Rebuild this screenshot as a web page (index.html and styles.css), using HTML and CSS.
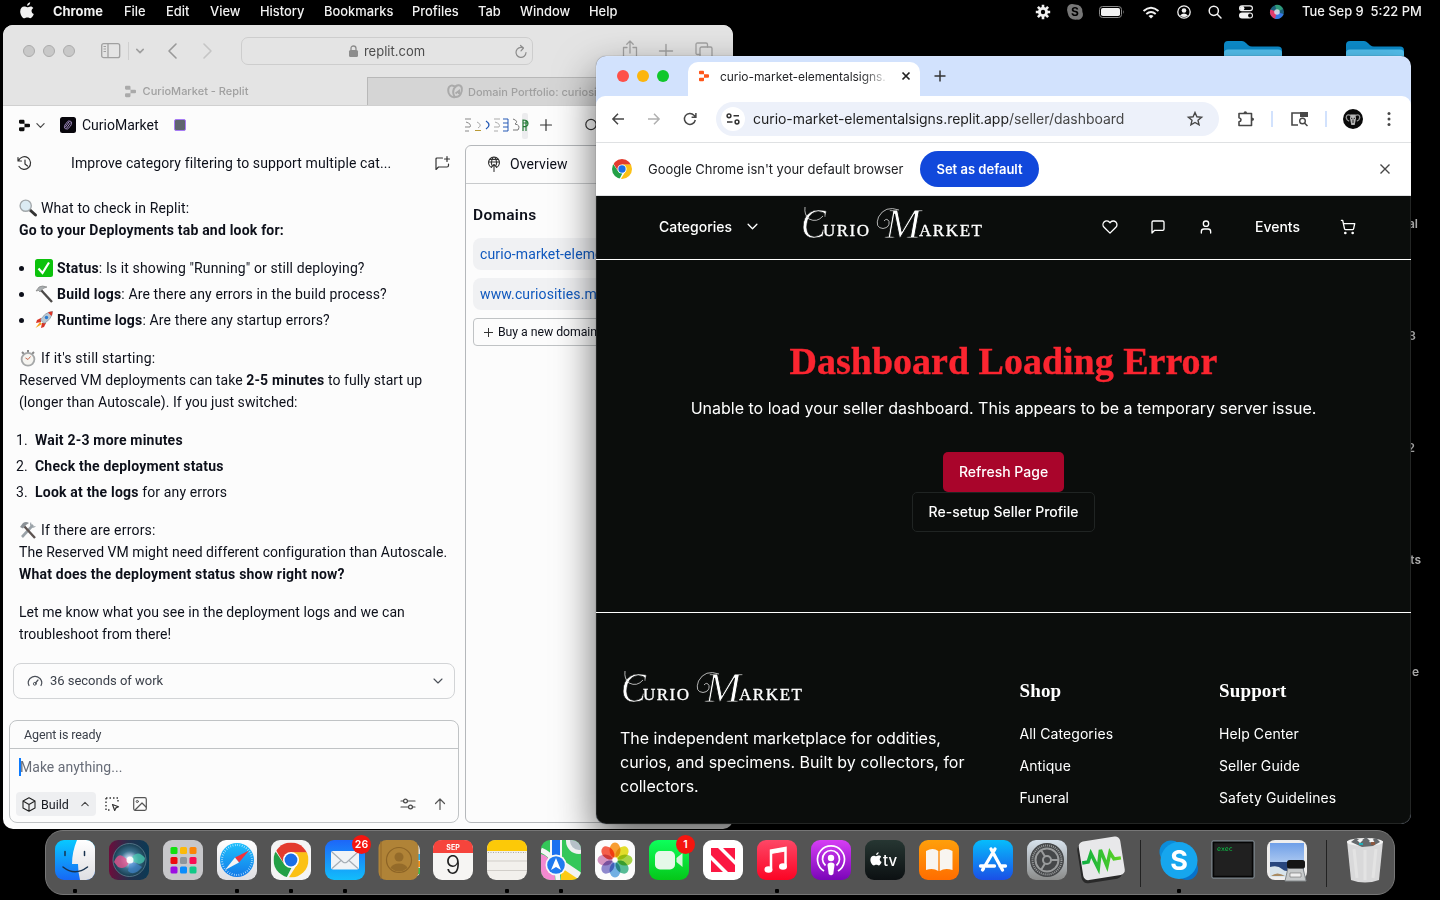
FILE: index.html
```html
<!DOCTYPE html>
<html lang="en">
<head>
<meta charset="utf-8">
<title>Curio Market</title>
<link rel="stylesheet" href="styles.css">
</head>
<body>
<svg class="defs" width="0" height="0" aria-hidden="true">
  <defs>
    <linearGradient id="gFinder" x2="0" y2="1"><stop stop-color="#08c9ff"/><stop offset="1" stop-color="#1768f5"/></linearGradient>
    <linearGradient id="gWhite" x2="0" y2="1"><stop stop-color="#fff"/><stop offset="1" stop-color="#dedee2"/></linearGradient>
    <linearGradient id="gSiriBg" x2="1" y2="0"><stop stop-color="#6d0d3c"/><stop offset=".5" stop-color="#23304c"/><stop offset="1" stop-color="#0b3a55"/></linearGradient>
    <radialGradient id="gSiri"><stop stop-color="#fff"/><stop offset=".25" stop-color="#a8c4e0"/><stop offset=".55" stop-color="#3a6f8c"/><stop offset="1" stop-color="#173c50"/></radialGradient>
    <linearGradient id="gBlue" x2="0" y2="1"><stop stop-color="#1ec0fc"/><stop offset="1" stop-color="#1279e8"/></linearGradient>
    <linearGradient id="gMail" x2="0" y2="1"><stop stop-color="#1d66f8"/><stop offset="1" stop-color="#12bdfb"/></linearGradient>
    <linearGradient id="gStore" x2="0" y2="1"><stop stop-color="#06bdfc"/><stop offset="1" stop-color="#1b4fe6"/></linearGradient>
    <linearGradient id="gGreen" x2="0" y2="1"><stop stop-color="#0dff5b"/><stop offset="1" stop-color="#05c719"/></linearGradient>
    <linearGradient id="gRed" x2="0" y2="1"><stop stop-color="#fe4766"/><stop offset="1" stop-color="#fb0424"/></linearGradient>
    <linearGradient id="gPurple" x2="0" y2="1"><stop stop-color="#d63ef5"/><stop offset="1" stop-color="#7a05b8"/></linearGradient>
    <linearGradient id="gOrange" x2="0" y2="1"><stop stop-color="#ff9f0a"/><stop offset="1" stop-color="#ff6d00"/></linearGradient>
    <linearGradient id="gTv" x2="0" y2="1"><stop stop-color="#263632"/><stop offset="1" stop-color="#0c1012"/></linearGradient>
    <linearGradient id="gGrey" x2="0" y2="1"><stop stop-color="#d7e2ec"/><stop offset="1" stop-color="#8b8c8b"/></linearGradient>
    <linearGradient id="gPulse"><stop stop-color="#0dae42"/><stop offset="1" stop-color="#5ed323"/></linearGradient>
    <linearGradient id="gPic" x2="0" y2="1"><stop stop-color="#6f9fe8"/><stop offset="1" stop-color="#a8c6f0"/></linearGradient>
    <clipPath id="cTile"><rect width="40" height="40" rx="9"/></clipPath>
    <clipPath id="cDisc"><circle cx="12" cy="12" r="12"/></clipPath>
    <symbol id="apple" viewBox="0 0 14 17"><path d="M10.200.3c.1 1.900-1.400 3.400-3.100 3.400C6.900 2 8.500.5 10.200.3zM13.300 6c-2.600 1.500-2.100 5 .5 6.100-.7 1.900-2 4.200-3.500 4.200-1.100 0-1.500-.7-2.900-.7s-1.900.7-2.900.7C2.300 16.300.2 12.400.2 9.400c0-3.200 2-4.900 4-4.900 1.300 0 2.100.7 3.100.7.9 0 1.900-.8 3.400-.8 1 0 2 .6 2.600 1.600z" fill="currentColor"/></symbol>
    <symbol id="replit" viewBox="0 0 12 14"><path d="M1.200.8h3.600Q6 .8 6 2v3H1.200Q0 5 0 3.800V2Q0 .8 1.200.8zM6 5h4.800Q12 5 12 6.200v1.600Q12 9 10.800 9H6zM1.200 9H6v3q0 1.200-1.200 1.200H1.200Q0 13.200 0 12v-1.800Q0 9 1.200 9z" fill="currentColor"/></symbol>
    <symbol id="down" viewBox="0 0 10 10"><path d="M1 3l4 4 4-4" class="ln"/></symbol>
    <symbol id="chrome" viewBox="0 0 24 24"><g clip-path="url(#cDisc)"><path d="M0 0h24v7H12L7 14 1.500 5z" fill="#e33b2e"/><path d="M1.300 6L7.500 15l5 2L9 24H0V6z" fill="#23a046"/><path d="M12 6.700h12V24H10.500l6-9.500z" fill="#fbc116"/></g><circle cx="12" cy="12" r="5.500" fill="#fff"/><circle cx="12" cy="12" r="4.400" fill="#1a6fe8"/></symbol>
    <symbol id="folder" viewBox="0 0 60 18"><path d="M1 18V5q0-4 4-4h14q2 0 4 2l2 2q2 1.500 4 1.500h26q4 0 4 4V18z" fill="#0c8ccb"/><path d="M1 18v-5q0-3.500 4-3.500h50q4 0 4 3.500v5z" fill="#54c2f0"/></symbol>
    <symbol id="wordmark" viewBox="0 0 184 34"><g fill="#fff" font-family="'Liberation Serif',serif"><text y="30.500"><tspan x="0" y="31.500" font-size="43" font-style="italic" stroke="#0b0d0c" stroke-width=".7" textLength="25" lengthAdjust="spacingAndGlyphs">C</tspan><tspan x="22" y="29.500" font-size="17" stroke="#fff" stroke-width=".35" textLength="46">URIO</tspan></text><text><tspan x="84" y="31.500" font-size="43" font-style="italic" stroke="#0b0d0c" stroke-width=".9" textLength="36" lengthAdjust="spacingAndGlyphs">M</tspan><tspan x="118" y="29.500" font-size="17" stroke="#fff" stroke-width=".35" textLength="63">ARKET</tspan></text></g><path d="M98 4Q84-1 77.500 11 73.500 22 82 22.500q7-1 6-7-2-4-5-.5M4 1q-1 8 4 12 8 4 14-3" fill="none" stroke="#ddd" stroke-width=".8"/></symbol>
  </defs>
</svg>

<header class="menubar">
  <svg class="m-apple" width="14" height="17"><use href="#apple"/></svg>
  <nav class="menus"><b>Chrome</b><span>File</span><span>Edit</span><span>View</span><span>History</span><span>Bookmarks</span><span>Profiles</span><span>Tab</span><span>Window</span><span>Help</span></nav>
  <div class="status">
    <svg width="16" height="16" viewBox="0 0 16 16"><g stroke="#f0f0f0" stroke-width="2.600"><path d="M8 .8v14.400M.8 8h14.400M2.900 2.900l10.200 10.200M13.100 2.900L2.900 13.100"/></g><circle cx="8" cy="8" r="5" fill="#f0f0f0"/><circle cx="8" cy="8" r="2.200" fill="#000"/></svg>
    <svg width="16" height="16" viewBox="0 0 16 16"><path d="M5 0q2 0 3 .6Q15.500.8 15.400 8q.9 1.600.4 4-1.500 4-5.600 3.600Q2 16.500.7 9-.5 6 .5 3 2 0 5 0z" fill="#777"/><text x="8" y="12.200" text-anchor="middle" class="skype-s">S</text></svg>
    <svg width="26" height="12" viewBox="0 0 26 12"><rect x=".5" y=".5" width="22" height="11" rx="3" fill="none" stroke="#8a8a8a"/><rect x="2" y="2" width="19" height="8" rx="1.800" fill="#f2f2f2"/><path d="M24 4q1.500 2 0 4z" fill="#8a8a8a"/></svg>
    <svg width="18" height="13" viewBox="0 0 18 13"><g fill="none" stroke="#f2f2f2" stroke-width="2"><path d="M1.500 5Q9-1.500 16.500 5"/><path d="M4.300 8Q9 4 13.700 8"/></g><path d="M6.500 10Q9 8 11.500 10L9 12.600z" fill="#f2f2f2"/></svg>
    <svg width="14" height="14" viewBox="0 0 14 14"><circle cx="7" cy="7" r="6.200" fill="none" stroke="#f2f2f2" stroke-width="1.300"/><circle cx="7" cy="5.500" r="2.300" fill="#f2f2f2"/><path d="M3 10.500Q7 6.500 11 10.500 7 13.500 3 10.500z" fill="#f2f2f2"/></svg>
    <svg width="14" height="14" viewBox="0 0 14 14"><g fill="none" stroke="#f2f2f2" stroke-width="1.500" stroke-linecap="round"><circle cx="5.800" cy="5.800" r="4.600"/><path d="M9.300 9.300L13 13"/></g></svg>
    <svg width="14" height="14" viewBox="0 0 14 14"><rect x=".6" y=".9" width="12.800" height="4.800" rx="2.400" fill="none" stroke="#f2f2f2" stroke-width="1.200"/><circle cx="3.200" cy="3.300" r="2.200" fill="#f2f2f2"/><rect y="7.500" width="14" height="6" rx="3" fill="#f2f2f2"/><circle cx="11" cy="10.500" r="1.900" fill="#000"/></svg>
    <svg width="14" height="14" viewBox="0 0 14 14"><circle cx="7" cy="7" r="7" fill="#1c5f7c"/><path d="M7 7L.5 4.500A7 7 0 0 0 6 14z" fill="#df3c6c"/><path d="M7 7L5 0a7 7 0 0 1 8 4z" fill="#2f9a78"/><path d="M7 7L13.500 9A7 7 0 0 1 5 13.700z" fill="#3578e5"/><circle cx="7" cy="7" r="2.800" fill="#dce5ee" opacity=".85"/></svg>
  </div>
  <time class="clock">Tue Sep 9&nbsp; 5:22 PM</time>
</header>

<svg class="folder f1" width="60" height="18"><use href="#folder"/></svg>
<svg class="folder f2" width="60" height="18"><use href="#folder"/></svg>
<span class="desk d1">al</span><span class="desk d2">3</span><span class="desk d3">2</span><span class="desk d4">ts</span><span class="desk d5">e</span>

<section class="window safari">
  <div class="s-bar">
    <div class="lights off"><i></i><i></i><i></i></div>
    <svg class="s-side" width="20" height="16" viewBox="0 0 20 16"><g fill="none" stroke="#a0a0a0" stroke-width="1.300"><rect x=".7" y=".7" width="18" height="14" rx="2"/><path d="M7 1v14"/><path d="M2.500 3.500h2.500M2.500 6h2.500M2.500 8.500h2.500" stroke-width="1"/></g></svg>
    <i class="s-sep"></i>
    <svg class="s-chev" width="8" height="8" stroke="#a0a0a0" stroke-width="2"><use href="#down"/></svg>
    <svg class="s-back" width="10" height="16" viewBox="0 0 10 16"><path d="M9 1L2 8l7 7" class="ln" stroke="#999" stroke-width="1.600"/></svg>
    <svg class="s-fwd" width="10" height="16" viewBox="0 0 10 16"><path d="M1 1l7 7-7 7" class="ln" stroke="#c5c5c5" stroke-width="1.600"/></svg>
    <div class="s-url">
      <svg width="9" height="12" viewBox="0 0 9 12"><rect y="5" width="9" height="7" rx="1.500" fill="#8c8c8c"/><path d="M2 5V3.500Q2 1 4.500 1T7 3.500V5" fill="none" stroke="#8c8c8c" stroke-width="1.300"/></svg>
      <span>replit.com</span>
      <svg class="s-reload" width="12" height="14" viewBox="0 0 12 14"><path d="M8 2.800A5 5 0 1 0 11 7.500M5.500.5L8.500 3 6 5.800" class="ln" stroke="#8c8c8c" stroke-width="1.200"/></svg>
    </div>
    <svg class="s-share" width="16" height="20" viewBox="0 0 16 20"><path d="M5 7.500H1.500V19h13V7.500H11M8 13V1.200M4.800 4.200L8 1l3.200 3.200" class="ln" stroke="#a2a2a2" stroke-width="1.300"/></svg>
    <svg class="s-plus" width="14" height="14" viewBox="0 0 14 14"><path d="M7 .5v13M.5 7h13" class="ln" stroke="#a2a2a2" stroke-width="1.400"/></svg>
    <svg class="s-tabs" width="18" height="18" viewBox="0 0 18 18"><path d="M5 12.500H2.500Q1 12.500 1 11V2.500Q1 1 2.500 1H11q1.500 0 1.500 1.500V5" class="ln" stroke="#a2a2a2" stroke-width="1.300"/><rect x="5" y="5" width="12" height="12" rx="1.500" fill="none" stroke="#a2a2a2" stroke-width="1.300"/></svg>
  </div>
  <div class="s-tabrow">
    <div class="s-tab"><svg width="11" height="13"><use href="#replit"/></svg><span>CurioMarket - Replit</span></div>
    <div class="s-tab idle"><svg width="16" height="15" viewBox="0 0 16 15"><g fill="none" stroke="#aaa" stroke-width="2"><path d="M8 13C4 14 1 10 1.200 6 1.500 1 6 0 9 4M8 13C13 13.500 15.500 8 14.800 4 14 0 9 .5 7 4.500 5.500 8 6 10.500 8 13zM8.500 9.500L12 7v3"/></g></svg><span>Domain Portfolio: curiosities</span></div>
  </div>
  <div class="replit">
    <div class="r-top">
      <svg class="r-logo" width="11" height="13"><use href="#replit"/></svg>
      <svg class="r-chev" width="9" height="9" stroke="#444" stroke-width="1.300"><use href="#down"/></svg>
      <svg class="r-app" width="16" height="16" viewBox="0 0 16 16"><rect width="16" height="16" rx="2.500" fill="#08060c"/><g transform="rotate(35 8 8)" fill="none" stroke="#a08bc0" stroke-width=".9"><ellipse cx="8" cy="8" rx="2.600" ry="4.600"/><path d="M7 4.500v7M8.700 4.500v7"/></g></svg>
      <span class="r-name">CurioMarket</span>
      <i class="r-sq"></i>
      <svg class="r-icons" width="66" height="18" viewBox="0 0 66 18"><g fill="none" stroke-width="1"><path d="M0 3h6M1 6q6 2 4 5H0M0 15h4" stroke="#888"/><path d="M12 6q6 3 1 6" stroke="#aaa"/><path d="M10 14.500h6" stroke="#b99a37"/><path d="M21 5q6 4 0 8" stroke="#2459b5" stroke-width="1.300"/><path d="M29 3h6M30 6q6 2 4 5H29M29 15h4" stroke="#aaa"/><path d="M38 3h5v12h-5M38 7h5M38 11h5" stroke="#2459b5"/><path d="M48 3q6 2 2 5 6 1 3 6h-5" stroke="#777"/></g><rect x="57" y="-3" width="6" height="26" rx="2" fill="#ececee"/><path d="M58 15V4q5 0 5 3.500t-5 3M58 7h5M61 4v11" fill="none" stroke="#237a35" stroke-width="1.200"/></svg>
      <svg class="r-plus" width="12" height="12" viewBox="0 0 12 12"><path d="M6 .5v11M.5 6h11" class="ln" stroke="#333" stroke-width="1.200"/></svg>
      <svg class="r-search" width="14" height="14" viewBox="0 0 14 14"><circle cx="6" cy="6.500" r="5.200" class="ln" stroke="#333" stroke-width="1.200"/></svg>
    </div>
    <div class="r-body">
      <div class="chat">
        <div class="c-title">
          <svg width="16" height="15" viewBox="0 0 16 15"><path d="M1.500 4.500A6.300 6.300 0 1 1 2 10.500M1 1.500v3.500h3.500M8 4v4l2.500 2" class="ln" stroke="#333" stroke-width="1.200"/></svg>
          <span>Improve category filtering to support multiple cat...</span>
          <svg width="15" height="15" viewBox="0 0 15 15"><path d="M7.500 2H2Q1 2 1 3v10.500L3.500 11H12q1.500 0 1.500-1.500V8M12 .5v5M9.500 3h5" class="ln" stroke="#333" stroke-width="1.200"/></svg>
        </div>
        <div class="msg">
          <p><svg class="em" viewBox="0 0 18 18"><path d="M11 11l5.500 5" stroke="#333" stroke-width="3" stroke-linecap="round"/><circle cx="6.700" cy="6.700" r="5.600" fill="#dcebf3" stroke="#a3a8ab" stroke-width="1.400"/></svg>What to check in Replit:<br><b>Go to your Deployments tab and look for:</b></p>
          <ul>
            <li><svg class="em" viewBox="0 0 18 18"><rect width="18" height="18" rx="2.500" fill="#0cc20c"/><path d="M3.500 9.500l4 4.500L14 3.500" fill="none" stroke="#fff" stroke-width="2.200"/></svg><b>Status</b>: Is it showing "Running" or still deploying?</li>
            <li><svg class="em" viewBox="0 0 18 18"><path d="M6 5l11 12" stroke="#4c4a49" stroke-width="2.400"/><path d="M1 6l3-4q3-2 8 0L8 3.500 5 7 3.500 5.500z" fill="#a8adaf" stroke="#777" stroke-width=".6"/></svg><b>Build logs</b>: Are there any errors in the build process?</li>
            <li><svg class="em" viewBox="0 0 18 18"><path d="M5 11l-4.500 6L7 13z" fill="#f8a51b"/><path d="M6 7L2 9 1 12l5-1zM11 12l-2 4-3 1 1-5z" fill="#d83427"/><path d="M17.500.5Q10 1 5.500 9L9 12.500Q17 8 17.500.5z" fill="#b9c7d2" stroke="#6d7c88" stroke-width=".6"/><path d="M17.500.5q-2.500 0-4.500 1l3.500 3.500q1-2 1-4.500z" fill="#dd3427"/><circle cx="11.500" cy="6.500" r="1.700" fill="#287bd0"/></svg><b>Runtime logs</b>: Are there any startup errors?</li>
          </ul>
          <p class="tight"><svg class="em" viewBox="0 0 18 18"><path d="M9 1v3M3 3l2 2M15 3l-2 2" stroke="#888" stroke-width="2"/><circle cx="9" cy="10.300" r="6.400" fill="#f5f4f0" stroke="#a5a7a8" stroke-width="1.800"/><path d="M9 10.500l2.500-3M9 10.500L6.500 9" stroke="#c86a53"/></svg><span>If it's still starting:</span><br>Reserved VM deployments can take <b>2-5 minutes</b> to fully start up<br>(longer than Autoscale). If you just switched:</p>
          <ol><li><b>Wait 2-3 more minutes</b></li><li><b>Check the deployment status</b></li><li><b>Look at the logs</b> for any errors</li></ol>
          <p class="tight"><svg class="em" viewBox="0 0 18 18"><path d="M14 4L3 16" stroke="#9aa2a8" stroke-width="2.600"/><path d="M5 5l11 12" stroke="#5c5350" stroke-width="2.400"/><path d="M1 6l3-4q3-2 6 0L7 4 4 7.500z" fill="#8b9196"/><path d="M12 1q-2 2 0 5 3 2 5-1l-3 .5-1.500-2z" fill="#9aa2a8"/></svg><span>If there are errors:</span><br>The Reserved VM might need different configuration than Autoscale.<br><b>What does the deployment status show right now?</b></p>
          <p class="tight">Let me know what you see in the deployment logs and we can<br>troubleshoot from there!</p>
        </div>
        <div class="work">
          <svg width="16" height="12" viewBox="0 0 16 12"><path d="M2 10.500Q0 7 3 3.500 8-.8 13 3.500 16 7 14 10.500M8.500 8L11 5" class="ln" stroke="#4a4f57" stroke-width="1.200"/><circle cx="7.800" cy="8.800" r="1.400" class="ln" stroke="#4a4f57"/></svg>
          <span>36 seconds of work</span>
          <svg width="10" height="10" stroke="#4a4f57" stroke-width="1.100"><use href="#down"/></svg>
        </div>
        <div class="agent">
          <div class="a-state">Agent is ready</div>
          <div class="a-input"><i></i>Make anything...</div>
          <div class="a-tools">
            <div class="build"><svg width="14" height="15" viewBox="0 0 14 15"><path d="M7 .8l6 3.300v6.800L7 14.200 1 10.900V4.100zM1 4.100l6 3.400 6-3.400M7 7.500v6.700" class="ln" stroke="#222" stroke-width="1.100"/></svg><span>Build</span><svg class="up" width="8" height="8" stroke="#444" stroke-width="1.300"><use href="#down"/></svg></div>
            <svg class="a-sel" width="15" height="15" viewBox="0 0 15 15"><path d="M1 1h12v5M1 1v12h5" fill="none" stroke="#333" stroke-width="1.400" stroke-dasharray="1.500 2"/><path d="M7.500 7.500l6 2.200-2.600 1.200-1.200 2.600z" class="ln" stroke="#333" stroke-width="1.200"/></svg>
            <svg class="a-img" width="14" height="14" viewBox="0 0 14 14"><rect x=".7" y=".7" width="12.600" height="12.600" rx="1.500" class="ln" stroke="#555" stroke-width="1.200"/><circle cx="4.300" cy="4.500" r="1.100" class="ln" stroke="#555"/><path d="M2 13l7-7 4 4" class="ln" stroke="#555" stroke-width="1.200"/></svg>
            <svg class="a-set" width="14" height="12" viewBox="0 0 14 12"><path d="M0 3h2.500M6.500 3H14M0 9h7.500M11.500 9H14" class="ln" stroke="#444" stroke-width="1.200"/><circle cx="4.500" cy="3" r="1.900" class="ln" stroke="#444" stroke-width="1.200"/><circle cx="9.500" cy="9" r="1.900" class="ln" stroke="#444" stroke-width="1.200"/></svg>
            <svg class="a-up" width="12" height="12" viewBox="0 0 12 12"><path d="M6 11.500V1M1.500 5.500L6 1l4.500 4.500" class="ln" stroke="#555" stroke-width="1.200"/></svg>
          </div>
        </div>
      </div>
      <div class="pane">
        <div class="p-head"><svg width="14" height="16" viewBox="0 0 14 16"><g class="ln" stroke="#333" stroke-width="1.100"><path d="M4.500 11.500A5.500 5.500 0 1 1 9.500 11.500M7 15.500V8.500M4.500 11L7 8.500 9.500 11M1.500 6h11M7 .8Q3.500 4 4.800 9M7 .8Q10.500 4 9.200 9M2.500 3.500h9"/></g></svg><span>Overview</span></div>
        <h2>Domains</h2>
        <a class="chip">curio-market-elementalsigns</a>
        <a class="chip">www.curiosities.market</a>
        <div class="buy"><svg width="9" height="9" viewBox="0 0 9 9"><path d="M4.500 0v9M0 4.500h9" stroke="#333"/></svg>Buy a new domain</div>
      </div>
    </div>
  </div>
</section>

<section class="window chrome">
  <div class="tabs">
    <div class="lights on"><i></i><i></i><i></i></div>
    <div class="tab"><svg width="10" height="12"><use href="#replit"/></svg><span>curio-market-elementalsigns.</span><svg class="x" width="8" height="8" viewBox="0 0 8 8"><path d="M.5.5l7 7M7.500.5l-7 7" stroke="#222" stroke-width="1.700"/></svg></div>
    <svg class="newtab" width="12" height="12" viewBox="0 0 12 12"><path d="M6 .5v11M.5 6h11" stroke="#333" stroke-width="1.500"/></svg>
  </div>
  <div class="bar">
    <svg class="b-back" width="12" height="12" viewBox="0 0 12 12"><path d="M12 6H1M6 .8L.9 6 6 11.200" fill="none" stroke="#474747" stroke-width="1.500"/></svg>
    <svg class="b-fwd" width="12" height="12" viewBox="0 0 12 12"><path d="M0 6h11M6 .8L11.100 6 6 11.200" fill="none" stroke="#b0b0b0" stroke-width="1.500"/></svg>
    <svg class="b-rel" width="14" height="14" viewBox="0 0 14 14"><path d="M12.300 8A5.500 5.500 0 1 1 11 3.200L12.800 5M12.900 1v4.300H8.600" fill="none" stroke="#474747" stroke-width="1.500"/></svg>
    <div class="omni">
      <span class="tune"><svg width="14" height="12" viewBox="0 0 14 12"><g fill="none" stroke="#333" stroke-width="1.500"><circle cx="3" cy="2.800" r="1.900"/><path d="M7.500 2.800H13M1 9h5.500"/><circle cx="11" cy="9" r="1.900"/></g></svg></span>
      <span class="url">curio-market-elementalsigns.replit.app<em>/seller/dashboard</em></span>
      <svg class="star" width="16" height="16" viewBox="0 0 16 16"><path d="M8 1.500l1.900 4.300 4.700.4-3.600 3.100 1.100 4.600L8 11.500l-4.100 2.400L5 9.300 1.400 6.200l4.700-.4z" fill="none" stroke="#474747" stroke-width="1.400"/></svg>
    </div>
    <svg class="puz" width="18" height="18" viewBox="0 0 18 18"><path d="M2 3.500h12.500v12H2v-3.700q2-.3 2-2t-2-2z" fill="none" stroke="#474747" stroke-width="1.600" stroke-linejoin="round"/><path d="M6.500 3.500q0-2.300 1.800-2.300t1.800 2.300zM14.500 7.500q2.600 0 2.600 1.800t-2.600 1.800z" fill="#474747"/></svg>
    <i class="b-sep"></i>
    <svg class="lens" width="19" height="16" viewBox="0 0 19 16"><path d="M8 14H2V2h15v3.500" fill="none" stroke="#474747" stroke-width="1.600"/><path d="M10 1h8v5h-8z" fill="#474747"/><circle cx="12.500" cy="10" r="2.800" fill="#fff" stroke="#474747" stroke-width="1.400"/><path d="M14.500 12l3 3" stroke="#474747" stroke-width="1.500"/></svg>
    <i class="b-sep"></i>
    <svg class="ava" width="20" height="20" viewBox="0 0 20 20"><circle cx="10" cy="10" r="10" fill="#0a0a0a"/><g fill="none" stroke="#999" stroke-width="1.300"><path d="M8 6.500Q3.500 4.500 3.200 8.500q.5 3 3 3.500M12 6.500q4.500-2 4.800 2-.5 3-3 3.500"/></g><path d="M7.500 5.500h5l.5 4-1.300 6.500H8.300L7 9.500z" fill="#b5b5b5"/><path d="M8 9l1.500 1M12 9l-1.500 1M10 11v3" stroke="#222"/></svg>
    <svg class="dots" width="4" height="16" viewBox="0 0 4 16"><g fill="#474747"><circle cx="2" cy="2.500" r="1.500"/><circle cx="2" cy="8" r="1.500"/><circle cx="2" cy="13.500" r="1.500"/></g></svg>
  </div>
  <div class="info">
    <svg width="20" height="20"><use href="#chrome"/></svg>
    <span>Google Chrome isn't your default browser</span>
    <button>Set as default</button>
    <svg class="i-x" width="10" height="10" viewBox="0 0 10 10"><path d="M.5.500l9 9M9.500.5l-9 9" stroke="#474747" stroke-width="1.400"/></svg>
  </div>
  <div class="page">
    <header class="site">
      <span class="cat">Categories</span>
      <svg class="n-chev" width="11" height="11" stroke="#fff" stroke-width="1.200"><use href="#down"/></svg>
      <svg class="n-logo" width="184" height="34"><use href="#wordmark"/></svg>
      <svg class="n-heart" width="16" height="16" viewBox="0 0 24 24"><path d="M20.800 4.600a5.500 5.500 0 0 0-7.800 0L12 5.700l-1.100-1.100a5.500 5.500 0 0 0-7.800 7.800L12 21.200l8.800-8.800a5.500 5.500 0 0 0 0-7.800z" class="ln" stroke="#fff" stroke-width="2"/></svg>
      <svg class="n-msg" width="16" height="16" viewBox="0 0 24 24"><path d="M21 15a2 2 0 0 1-2 2H7l-4 4V5a2 2 0 0 1 2-2h14a2 2 0 0 1 2 2z" class="ln" stroke="#fff" stroke-width="2"/></svg>
      <svg class="n-user" width="16" height="16" viewBox="0 0 24 24"><path d="M19 21v-2a4 4 0 0 0-4-4H9a4 4 0 0 0-4 4v2" class="ln" stroke="#fff" stroke-width="2"/><circle cx="12" cy="7" r="4" class="ln" stroke="#fff" stroke-width="2"/></svg>
      <span class="ev">Events</span>
      <svg class="n-cart" width="16" height="16" viewBox="0 0 24 24"><circle cx="8" cy="21" r="1" class="ln" stroke="#fff" stroke-width="2"/><circle cx="19" cy="21" r="1" class="ln" stroke="#fff" stroke-width="2"/><path d="M2.050 2.050h2l2.660 12.420a2 2 0 0 0 2 1.580h9.780a2 2 0 0 0 1.950-1.570l1.650-7.430H5.120" class="ln" stroke="#fff" stroke-width="2"/></svg>
    </header>
    <main>
      <h1>Dashboard Loading Error</h1>
      <p>Unable to load your seller dashboard. This appears to be a temporary server issue.</p>
      <button class="red">Refresh Page</button>
      <button class="line">Re-setup Seller Profile</button>
    </main>
    <footer>
      <div class="about"><svg width="184" height="34"><use href="#wordmark"/></svg><p>The independent marketplace for oddities,<br>curios, and specimens. Built by collectors, for<br>collectors.</p></div>
      <div class="col"><h3>Shop</h3><a>All Categories</a><a>Antique</a><a>Funeral</a></div>
      <div class="col"><h3>Support</h3><a>Help Center</a><a>Seller Guide</a><a>Safety Guidelines</a></div>
    </footer>
  </div>
</section>

<div class="dock">
  <div class="app run"><svg viewBox="0 0 40 40"><g clip-path="url(#cTile)"><rect width="40" height="40" fill="url(#gFinder)"/><path d="M22 0Q17 12 17 24h6q0 8 2 16h15V0z" fill="url(#gWhite)"/></g><path d="M10 11.500v4M29.500 11.500v4M8 27q12 9.500 24.500 0" fill="none" stroke="#17324f" stroke-width="1.500" stroke-linecap="round"/></svg></div>
  <div class="app"><svg viewBox="0 0 40 40"><rect width="40" height="40" rx="9" fill="url(#gSiriBg)"/><circle cx="20.500" cy="20" r="16.500" fill="url(#gSiri)" stroke="#698c9c" stroke-width=".7"/><path d="M5 22Q9 12 15 17t6 3q-4 11-12 7z" fill="#e4528c" opacity=".8"/><path d="M21 20Q28 8 36 18q0 5-6 6z" fill="#4ac9b0" opacity=".75"/><path d="M21 21q6 2 12 6-8 10-14 4z" fill="#428ad8" opacity=".6"/><circle cx="21" cy="20" r="3.500" fill="#fff" opacity=".9"/></svg></div>
  <div class="app"><svg viewBox="0 0 40 40"><rect width="40" height="40" rx="9" fill="#c7c7ca"/><rect x="7.500" y="7" width="7" height="7" rx="1.500" fill="#12e010"/><rect x="17" y="7" width="7" height="7" rx="1.500" fill="#fbb909"/><rect x="26.500" y="7" width="7" height="7" rx="1.500" fill="#fb8507"/><rect x="7.500" y="17" width="7" height="7" rx="1.500" fill="#ee0a0e"/><rect x="17" y="17" width="7" height="7" rx="1.500" fill="#8e969c"/><rect x="26.500" y="17" width="7" height="7" rx="1.500" fill="#fa0d54"/><rect x="7.500" y="26.500" width="7" height="7" rx="1.500" fill="#9c0de2"/><rect x="17" y="26.500" width="7" height="7" rx="1.500" fill="#0b8cfb"/><rect x="26.500" y="26.500" width="7" height="7" rx="1.500" fill="#10c987"/></svg></div>
  <div class="app run"><svg viewBox="0 0 40 40"><rect width="40" height="40" rx="9" fill="url(#gWhite)"/><circle cx="20" cy="20" r="17" fill="url(#gBlue)"/><circle cx="20" cy="20" r="15" fill="none" stroke="#d8f1ff" stroke-width="2" stroke-dasharray=".6 1.750"/><path d="M32 10.500L18 17.500l4 5z" fill="#f3323b"/><path d="M8 30l10-12.500 4 5z" fill="#f4f4f4"/></svg></div>
  <div class="app run"><svg viewBox="0 0 40 40"><rect width="40" height="40" rx="9" fill="#f4f4f4"/><use href="#chrome" x="2.500" y="2.500" width="35" height="35"/></svg></div>
  <div class="app run"><svg viewBox="0 0 40 40"><rect width="40" height="40" rx="9" fill="url(#gMail)"/><rect x="6" y="11" width="28" height="18.500" rx="2" fill="#f0f3f6"/><path d="M7 12l11 10q2 1.500 4 0l11-10M7 28.500l9-8M33 28.500l-9-8" fill="none" stroke="#a5adb5" stroke-width="1.200"/></svg><b class="badge">26</b></div>
  <div class="app"><svg viewBox="0 0 40 40"><path d="M34 5h5q2 2 2 5v20q0 5-3 6h-4z" fill="#ddd"/><path d="M36 14h5v6h-5z" fill="#2eaae8"/><path d="M36 21h5v6h-5z" fill="#fa9419"/><path d="M36 28h5v6h-5z" fill="#3cb84c"/><rect x="-.5" width="40" height="40" rx="8" fill="#b08337"/><path d="M2 1v38" stroke="#94692a"/><circle cx="20" cy="20" r="12.500" fill="none" stroke="#8d6426" stroke-width="1.200"/><circle cx="20" cy="17" r="4.500" fill="#946b2a"/><path d="M11.500 28q2-4.500 8.500-4.500t8.500 4.500q-8.500 7-17 0z" fill="#946b2a"/></svg></div>
  <div class="app"><svg viewBox="0 0 40 40"><rect width="40" height="40" rx="9" fill="#f6f5f3"/><path d="M0 13V9q0-9 9-9h22q9 0 9 9v4z" fill="#f6443c"/><text x="20" y="9.600" text-anchor="middle" class="cal-m">SEP</text><text x="20" y="34" text-anchor="middle" class="cal-d">9</text></svg></div>
  <div class="app run"><svg viewBox="0 0 40 40"><rect width="40" height="40" rx="9" fill="#f2f0ec"/><path d="M0 11V9q0-9 9-9h22q9 0 9 9v2z" fill="#fcc908"/><path d="M1 12.500h38" stroke="#aaa" stroke-dasharray="1 1.500"/><path d="M0 21h40M0 30.500h40" stroke="#d1cec9"/></svg></div>
  <div class="app run"><svg viewBox="0 0 40 40"><g clip-path="url(#cTile)"><rect width="40" height="40" fill="#34c759"/><path d="M0 14q14 4 14 26H0z" fill="#f389d0"/><path d="M0 10q16 6 17 30" stroke="#f5f5f5" stroke-width="5" fill="none"/><path d="M20 40V25l20 15z" fill="#fccb14"/><path d="M18 22l24 16" stroke="#f2f2f2" stroke-width="7"/><circle cx="38" cy="1" r="11" fill="#b5c0c8" stroke="#eef0f1" stroke-width="4"/><path d="M9 0h12v24H9z" fill="#f5f5f5"/><path d="M11 0h8v24h-8z" fill="#1a70f0"/></g><circle cx="15" cy="25" r="10.500" fill="#f8f8f8"/><circle cx="15" cy="25" r="8.800" fill="#207aef"/><path d="M15 18l5 12-5-3-5 3z" fill="#fff"/></svg></div>
  <div class="app"><svg viewBox="0 0 40 40"><rect width="40" height="40" rx="9" fill="#fcfcfc"/><g class="petals" transform="translate(20 20)"><ellipse cy="-10" rx="5.500" ry="7.500" fill="#fba033"/><ellipse cy="-10" rx="5.500" ry="7.500" fill="#e6e02a" transform="rotate(45)"/><ellipse cy="-10" rx="5.500" ry="7.500" fill="#a9d64a" transform="rotate(90)"/><ellipse cy="-10" rx="5.500" ry="7.500" fill="#58be98" transform="rotate(135)"/><ellipse cy="-10" rx="5.500" ry="7.500" fill="#72b1e6" transform="rotate(180)"/><ellipse cy="-10" rx="5.500" ry="7.500" fill="#918bd0" transform="rotate(225)"/><ellipse cy="-10" rx="5.500" ry="7.500" fill="#d696c4" transform="rotate(270)"/><ellipse cy="-10" rx="5.500" ry="7.500" fill="#f7604c" transform="rotate(315)"/></g></svg></div>
  <div class="app"><svg viewBox="0 0 40 40"><rect width="40" height="40" rx="9" fill="url(#gGreen)"/><rect x="6" y="11" width="20" height="18.500" rx="5" fill="#e5f8e8"/><path d="M27.500 18l6-5v14l-6-5z" fill="#d6f3da"/></svg><b class="badge">1</b></div>
  <div class="app"><svg viewBox="0 0 40 40"><rect width="40" height="40" rx="9" fill="#fff"/><path d="M8 8h7l17 17v7h-7L8 15z" fill="#fb1742"/><path d="M20 8h12v12zM8 20l12 12H8z" fill="#fb1742"/></svg></div>
  <div class="app run"><svg viewBox="0 0 40 40"><rect width="40" height="40" rx="9" fill="url(#gRed)"/><path d="M14 28V10.500L28.500 8v17.500" fill="none" stroke="#fff" stroke-width="2.500"/><path d="M14 10.500L28.500 8v3L14 13.500z" fill="#fff" stroke="#fff"/><ellipse cx="11.500" cy="29.500" rx="4" ry="3.300" fill="#fff"/><ellipse cx="26" cy="26.500" rx="4" ry="3.300" fill="#fff"/></svg></div>
  <div class="app"><svg viewBox="0 0 40 40"><rect width="40" height="40" rx="9" fill="url(#gPurple)"/><g fill="none" stroke="#fff" stroke-width="1.700"><path d="M13 31A13.500 13.500 0 1 1 27 31"/><path d="M14.500 25.500A8.500 8.500 0 1 1 25.500 25.500"/></g><circle cx="20" cy="18" r="3.200" fill="#fff"/><path d="M16.500 25q0-2.500 3.500-2.500t3.500 2.500l-1.200 9q-2.300 2.500-4.600 0z" fill="#fff"/></svg></div>
  <div class="app"><svg viewBox="0 0 40 40"><rect width="40" height="40" rx="9" fill="url(#gTv)"/><use href="#apple" x="5" y="12" width="12" height="14" color="#fff"/><text x="18" y="26" class="tv">tv</text></svg></div>
  <div class="app"><svg viewBox="0 0 40 40"><rect width="40" height="40" rx="9" fill="url(#gOrange)"/><path d="M19.300 31Q14 27.500 7 30V11q7-4 12.300 0zM20.700 31Q26 27.500 33.500 30V11q-7-4-12.800 0z" fill="#f8f5f0"/></svg></div>
  <div class="app"><svg viewBox="0 0 40 40"><rect width="40" height="40" rx="9" fill="url(#gStore)"/><path d="M22 9L12.500 25M10.500 28.500l-1 1.500M18 9l11.500 21M7.500 26h14M27 26h5.500" stroke="#fff" stroke-width="3.300" stroke-linecap="round"/></svg></div>
  <div class="app"><svg viewBox="0 0 40 40"><rect width="40" height="40" rx="9" fill="url(#gGrey)"/><circle cx="20" cy="20" r="17" fill="#454749"/><g fill="none" stroke="#999b9c"><circle cx="20" cy="20" r="14.500" stroke-width="2" stroke-dasharray="1 1"/><circle cx="20" cy="20" r="11.500" stroke-width="2"/><circle cx="20" cy="20" r="4" stroke-width="2"/><path d="M24 20h8M18 16.500L14 10M18 23.500L14 30" stroke-width="2"/></g></svg></div>
  <div class="app"><svg viewBox="0 0 40 40"><g transform="rotate(-9 20 20)"><rect x="-2" y="1" width="41" height="40" rx="6" fill="#292929"/><rect x="0" y="-1" width="42" height="39" rx="5" fill="#e8e8ea"/><path d="M1 20h6l4-8 5 16 5-18 4 17 5-13 3 7h7" fill="none" stroke="url(#gPulse)" stroke-width="3.500"/></g></svg></div>
  <i class="d-sep"></i>
  <div class="app run"><svg viewBox="0 0 40 40"><circle cx="12" cy="12" r="11.500" fill="#0b8cda"/><circle cx="28" cy="29" r="11" fill="#0872c9"/><circle cx="20" cy="20.500" r="18.500" fill="#16a6ee"/><text x="20" y="30" text-anchor="middle" class="sky">S</text></svg></div>
  <div class="app"><svg viewBox="0 0 40 40"><rect x="-1" y="1" width="42" height="37" rx="1" fill="#202020" stroke="#8d9ba5"/><rect x=".5" y="2.500" width="39" height="34" fill="none" stroke="#050505" stroke-width="1.500"/><text x="4" y="11" class="exec">exec</text></svg></div>
  <div class="app"><svg viewBox="0 0 40 40"><rect x="0" y="0" width="40" height="40" rx="8" fill="#efeeed"/><path d="M3 3h34v19H3z" fill="url(#gPic)"/><path d="M3 22h34v15H3z" fill="#28467d"/><path d="M3 27q8-2 12 2t10 0v8H3z" fill="#d8e4ec"/><path d="M4 36q6-5 14 0z" fill="#a98b63"/><path d="M21 28h15l3 13H18z" fill="#c6c9ca" stroke="#82878a"/><rect x="20" y="20" width="18" height="8.500" rx="2.500" fill="#151515"/><path d="M23 33h11v4H23z" fill="#eee" stroke="#555" stroke-width=".5"/></svg></div>
  <i class="d-sep"></i>
  <div class="app"><svg viewBox="0 0 40 40"><path d="M2 1l4 39q14 5 28 0l4-39z" fill="#d9d9da"/><path d="M9 9l3 29M20 10v30M31 9l-3 29" stroke="#e3e3e3" stroke-width="3"/><ellipse cx="20" cy="2" rx="18" ry="4" fill="#f2f2f2"/><path d="M6 2l5-4 5 3 5-4 4 4 6-3 4 4-7 4-11 1z" fill="#65696c"/><path d="M12 0l3 3 3-3zM24 2l3-4 3 5z" fill="#f5f5f5"/><path d="M14 3h4v2h-4z" fill="#21aeb7"/><path d="M26 2h4v3h-4z" fill="#8b5840"/></svg></div>
</div>
</body>
</html>
```
FILE: styles.css
```css
* { box-sizing: border-box; }
body { margin: 0; width: 1440px; height: 900px; overflow: hidden; background: #000; position: relative; font-family: Inter, "Liberation Sans", sans-serif; }
svg { display: block; flex: none; overflow: visible; }
h1, h2, h3, p, ul, ol { margin: 0; padding: 0; }
button { font-family: inherit; border: 0; cursor: pointer; }
i { flex: none; }
.defs { position: absolute; }
.ln { fill: none; stroke-linecap: round; stroke-linejoin: round; }

.menubar { display: flex; align-items: center; height: 24px; padding: 0 0 1px 20px; color: #f2f2f2; font-size: 12.900px; font-weight: 500; }
.m-apple { margin: -2px 19px 0 0; }
.menus { display: grid; grid-template-columns: 71px 42px 44px 50px 64px 88px 66px 42px 69px 60px; width: 596px; white-space: nowrap; }
.menus b { font-weight: 700; }
.status { display: flex; align-items: center; gap: 17px; width: 251px; margin-left: 386px; padding-top: 1px; }
.status svg:nth-child(2), .status svg:nth-child(3) { margin-left: -1px; }
.clock { margin-left: 16px; white-space: nowrap; }

.folder { position: absolute; top: 40px; }
.f1 { left: 1223px; }
.f2 { left: 1345px; }
.desk { position: absolute; color: #ddd; font-size: 12px; font-weight: 600; line-height: 16px; }
.d1 { right: 22px; top: 216px; }
.d2 { right: 24px; top: 328px; }
.d3 { right: 25px; top: 440px; }
.d4 { right: 19px; top: 552px; }
.d5 { right: 21px; top: 664px; }

.window { position: absolute; overflow: hidden; }
.lights { display: flex; gap: 8px; }
.lights i { width: 12px; height: 12px; border-radius: 50%; }
.off i { background: #c8c8c8; border: 1px solid #ababab; }

.safari { left: 3px; top: 25px; width: 730px; height: 804px; border-radius: 10px; background: #fcfcfc; display: flex; flex-direction: column; }
.s-bar { display: flex; align-items: center; height: 52px; padding-left: 20px; background: #e4e4e4; }
.s-side { margin-left: 26px; }
.s-sep { width: 1px; height: 18px; margin-left: 7px; background: #cfcfcf; }
.s-chev { margin-left: 7px; }
.s-back { margin-left: 23px; }
.s-fwd { margin-left: 26px; }
.s-url { position: relative; display: flex; align-items: center; justify-content: center; gap: 6px; width: 292px; height: 28px; margin: -1px 0 0 28px; border: 1px solid #cdcdcd; border-radius: 7px; font-size: 13px; color: #4d4d4d; }
.s-url span { padding-top: 1px; }
.s-reload { position: absolute; right: 5px; top: 7px; }
.s-share { margin-left: 89px; margin-top: -3px; }
.s-plus { margin-left: 21px; }
.s-tabs { margin-left: 22px; }
.s-tabrow { display: grid; grid-template-columns: 364px 366px; height: 29px; background: #e4e4e4; border-bottom: 1px solid #d0d0d0; }
.s-tab { display: flex; align-items: center; justify-content: center; gap: 7px; padding-left: 3px; color: #a0a0a0; font-size: 11px; font-weight: 500; white-space: nowrap; }
.s-tab svg { color: #aaa; }
.idle { background: #d5d5d5; border-top: 1px solid #b8b8b8; border-left: 1px solid #b8b8b8; justify-content: flex-start; padding-left: 79px; gap: 5px; }

.replit { flex: 1; display: flex; flex-direction: column; font-family: Roboto, sans-serif; color: #0d101a; }
.r-top { display: flex; align-items: center; height: 38px; padding-left: 16px; }
.r-logo { color: #0d0d0d; }
.r-chev { margin-left: 6px; }
.r-app { margin-left: 15px; }
.r-name { margin-left: 6px; font-size: 14px; width: 92px; }
.r-sq { width: 12px; height: 12px; background: #5f6470; border: 1.500px solid #a77bf5; border-radius: 2px; }
.r-icons { margin-left: 279px; }
.r-plus { margin-left: 9px; }
.r-search { margin-left: 33px; }
.r-body { flex: 1; display: grid; grid-template-columns: 462px 268px; }
.chat { display: flex; flex-direction: column; padding-top: 2px; }
.c-title { display: flex; align-items: center; height: 34px; padding-left: 14px; font-size: 14px; letter-spacing: .11px; }
.c-title span { width: 402px; padding-left: 38px; white-space: nowrap; }
.msg { display: flex; flex-direction: column; gap: 16px; margin-top: 17px; padding-left: 16px; font-size: 14px; line-height: 22px; white-space: nowrap; height: 449px; letter-spacing: .12px; }
.msg .tight { letter-spacing: .045px; }
.tight span { letter-spacing: .2px; }
.msg b { font-weight: 700; letter-spacing: .2px; }
.msg ul, .msg ol { display: flex; flex-direction: column; gap: 4px; padding-left: 16px; list-style: none; counter-reset: step; }
.msg li { position: relative; }
.msg ul li::before { content: ""; position: absolute; left: -16px; top: 9px; width: 5px; height: 5px; border-radius: 50%; background: #0d101a; }
.msg ol li::before { counter-increment: step; content: counter(step) "."; position: absolute; left: -19px; top: 0; }
.em { display: inline-block; width: 18px; height: 18px; margin-right: 4px; vertical-align: -4px; }
.work { display: flex; align-items: center; height: 36px; width: 442px; margin: 17px 0 0 10px; padding: 0 11px 0 13px; border: 1px solid #d2d4d6; border-radius: 8px; font-size: 13px; color: #3b404a; }
.work span { flex: 1; margin: -2px 0 0 7px; letter-spacing: -.5px; letter-spacing: -.02px; }
.agent { width: 450px; height: 103px; margin: 21px 0 0 6px; border: 1px solid #c0c3c5; border-radius: 8px; }
.a-state { height: 28px; line-height: 27px; padding-left: 14px; border-bottom: 1px solid #c0c3c5; font-size: 12.500px; letter-spacing: -.13px; color: #3b404a; }
.a-input { display: flex; align-items: center; height: 37px; padding: 0 0 2px 9px; font-size: 14px; color: #686d78; letter-spacing: .02px; }
.a-input i { width: 2px; height: 18px; background: #0a7aff; margin-right: -1px; }
.a-tools { display: flex; align-items: center; height: 36px; padding-left: 6px; }
.build { display: flex; align-items: center; width: 80px; height: 24px; padding-left: 6px; border-radius: 4px; background: #eeeff1; font-size: 12.500px; color: #15181f; }
.build span { width: 39px; padding-left: 5px; }
.up { transform: rotate(180deg); margin-left: 6px; }
.a-sel { margin-left: 9px; }
.a-img { margin-left: 13px; }
.a-set { margin-left: 254px; }
.a-up { margin-left: 19px; }
.pane { margin-top: 1px; height: 678px; border: 1px solid #b5b8bb; border-radius: 6px; white-space: nowrap; }
.p-head { display: flex; align-items: center; height: 38px; padding: 0 0 2px 21px; gap: 9px; border-bottom: 1px solid #c8cacc; font-size: 14px; letter-spacing: .1px; }
.pane h2 { padding-left: 7px; margin: 19px 0 11px; font-size: 15.500px; font-weight: 600; line-height: 24px; letter-spacing: .3px; }
.chip { display: block; width: 254px; height: 32px; line-height: 32px; margin: 0 0 8px 7px; padding-left: 7px; border-radius: 8px; background: #f0f1f3; font-size: 14px; color: #0f58be; letter-spacing: .12px; }
.buy { display: flex; align-items: center; gap: 5px; width: 136px; height: 28px; margin: 8px 0 0 7px; padding-left: 10px; border: 1px solid #c0c3c5; border-radius: 4px; font-size: 12.300px; letter-spacing: -.05px; }

.chrome { left: 596px; top: 56px; width: 815px; height: 768px; border-radius: 10px; background: #d2e2fd; box-shadow: 0 18px 40px rgba(0,0,0,.6), 0 0 1px rgba(0,0,0,.6); display: flex; flex-direction: column; }
.chrome::after { content: ""; position: absolute; inset: 0; border-radius: 10px; border: 1px solid rgba(255,255,255,.1); pointer-events: none; }
.tabs { display: flex; height: 40px; padding-left: 21px; }
.tabs .lights { margin-top: 14px; }
.on i:nth-child(1) { background: #fe5049; }
.on i:nth-child(2) { background: #fcb50c; }
.on i:nth-child(3) { background: #10c72a; }
.tab { display: flex; align-items: center; width: 232px; height: 34px; margin: 6px 0 0 19px; padding: 0 12px 6px 11px; border-radius: 10px 10px 0 0; background: #fff; color: #ff5619; }
.tab span { width: 168px; margin: 0 16px 0 11px; white-space: nowrap; font-size: 12px; letter-spacing: -.06px; color: transparent; background: linear-gradient(90deg, #202124 85%, #ddd); -webkit-background-clip: text; background-clip: text; }
.newtab { margin: 14px 0 0 14px; }
.bar { display: flex; align-items: center; height: 47px; padding-left: 16px; background: #fff; border-radius: 9px 9px 0 0; border-bottom: 1px solid #dfe1e3; }
.b-fwd { margin-left: 24px; }
.b-rel { margin-left: 23px; }
.omni { display: flex; align-items: center; width: 503px; height: 34px; margin-left: 19px; padding-left: 5px; border-radius: 17px; background: #edf1fa; }
.tune { display: flex; align-items: center; justify-content: center; width: 24px; height: 24px; border-radius: 50%; background: #fff; }
.url { width: 434px; padding: 0 0 2px 8px; font-size: 14px; letter-spacing: -.04px; color: #1f1f1f; white-space: nowrap; }
.url em { font-style: normal; color: #474747; }
.star { margin-left: 8px; }
.puz { margin-left: 18px; }
.b-sep { width: 2px; height: 16px; background: #d2e2fd; margin-left: 16px; }
.lens { margin-left: 17px; }
.ava { margin-left: 16px; }
.dots { margin-left: 24px; }
.info { display: flex; align-items: center; height: 53px; padding-left: 16px; background: #fff; font-size: 13px; color: #202124; border-bottom: 1px solid #dfe1e3; }
.info span { width: 272px; margin-left: 16px; white-space: nowrap; letter-spacing: -.04px; }
.info button { width: 119px; height: 36px; padding: 0; border-radius: 18px; background: #1148db; color: #fff; font-size: 13px; font-weight: 600; }
.i-x { margin-left: 341px; }

.page { flex: 1; background: #0b0d0c; color: #fff; }
.site { display: flex; align-items: center; height: 64px; padding: 0 0 2px 63px; border-bottom: 1px solid #fff; font-size: 14px; font-weight: 500; }
.cat { width: 88px; }
.n-logo { margin: -8px 0 0 43px; }
.n-heart { margin-left: 117px; }
.n-msg, .n-user { margin-left: 32px; }
.ev { width: 45px; margin-left: 41px; }
.n-cart { margin-left: 40px; }
.page main { display: flex; flex-direction: column; align-items: center; height: 353px; padding-top: 81px; border-bottom: 1px solid #fff; }
.page h1 { font-family: "Liberation Serif", serif; font-size: 38px; line-height: 40px; font-weight: 700; color: #fb2530; white-space: nowrap; -webkit-text-stroke: .4px #fb2530; }
.page main p { margin: 15px 0 32px; font-size: 16px; line-height: 24px; white-space: nowrap; }
.page button { height: 40px; border-radius: 5px; font-size: 14px; font-weight: 500; color: #fff; padding: 0 0 2px; }
.red { width: 121px; background: #a9052b; }
.page .line { width: 183px; background: transparent; border: 1px solid #202423; }
.page footer { display: grid; grid-template-columns: 399.500px 199.500px 180px; padding: 56px 0 0 24px; }
.about svg { margin: 1px 0 0 1px; }
.about p { margin-top: 22px; font-size: 16px; line-height: 24px; white-space: nowrap; }
.col { display: flex; flex-direction: column; padding-top: 8px; font-size: 14px; letter-spacing: .08px; }
.col h3 { margin-bottom: 19px; font-family: "Liberation Serif", serif; font-size: 19px; line-height: 28px; letter-spacing: .15px; }
.col a { line-height: 20px; margin-bottom: 12px; }

.dock { position: absolute; left: 45px; top: 830px; width: 1350px; height: 65px; padding: 9px 2px 0; display: flex; border: 1px solid #777; border-radius: 18px; background: #545454; }
.app { position: relative; flex: none; width: 54px; padding-left: 7px; }
.app svg { width: 40px; height: 40px; }
.petals ellipse { mix-blend-mode: multiply; }
.run::after { content: ""; position: absolute; left: 25px; top: 49px; width: 4px; height: 4px; border-radius: 1px; background: #000; }
.badge { position: absolute; left: 34px; top: -5px; width: 19px; height: 19px; border-radius: 50%; background: #f5150f; color: #fff; font-size: 10.500px; font-weight: 600; line-height: 19px; text-align: center; }
.d-sep { width: 24px; height: 47px; background: linear-gradient(#222, #222) 12px 0 / 1px 100% no-repeat; }
.skype-s { font: 700 12px Inter, sans-serif; }
.cal-m { font: 700 7px Inter, sans-serif; fill: #fff; }
.cal-d { font: 300 25px Inter, sans-serif; fill: #222; }
.tv { font: 500 15px Inter, sans-serif; fill: #fff; }
.sky { font: 700 27px Inter, sans-serif; fill: #fff; }
.exec { font: 6.500px "DejaVu Sans Mono", monospace; fill: #09d24a; }
```
